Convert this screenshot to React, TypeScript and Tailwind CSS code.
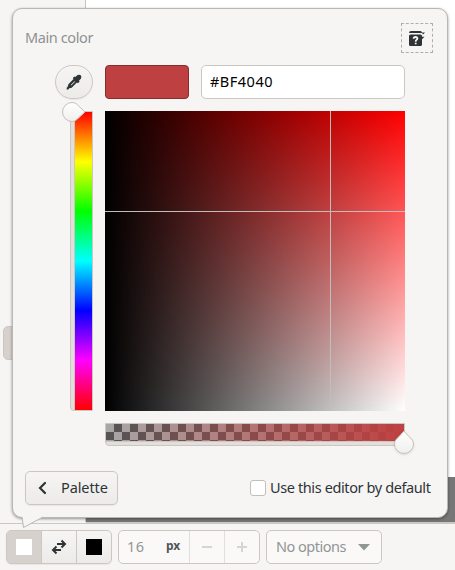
import type { ReactNode } from 'react';

const buttonFace = 'border border-[#cdc7c2] bg-linear-to-b from-[#f6f5f4] to-[#edebe9] shadow-[0_1px_1px_rgba(0,0,0,0.06)]';

function Label({ children, className }: { children: ReactNode; className: string }) {
  return <span className={`whitespace-nowrap pb-[2px] leading-5 ${className}`}>{children}</span>;
}

function Eyedropper() {
  return (
    <svg width="16" height="16" viewBox="0 0 16 16" fill="#2e3436">
      <path d="M10.600 1.800C11.700.6 13.600.3 14.700 1.300C15.800 2.400 15.400 4.300 14.200 5.400L13 6.500L13.600 7.600L12 9.200L10.900 8.500L5.700 13.700L3.300 14.300L2.200 15.400H.7V13.700L1.700 12.700L2.400 10.200L7.500 5.100L6.800 4L8.400 2.400L9.500 3zM8.500 7.200L5 10.700L4.700 11.500L5.500 11.200L9 7.700z" />
    </svg>
  );
}

function HelpIcon() {
  return (
    <svg width="16" height="16" viewBox="0 0 16 16" fill="#2e3436">
      <path d="M0 3Q0 1 2 1H11.500Q12.600 1 13 2.500H16L14 4.500L13 3H0z" />
      <path d="M1.500 4.500H11.500Q13 4.500 13 6V6.800H15.500L13 9.200V14.500Q13 16 11.500 16H1.500Q0 16 0 14.500V6Q0 4.500 1.500 4.500z" />
      <path d="M4.600 8.700Q4.700 7 6.500 7Q8.400 7 8.400 8.600Q8.400 9.500 7.400 10Q6.700 10.400 6.700 11.700" fill="none" stroke="#f6f5f4" strokeWidth="1.800" />
      <path d="M5.800 12.700h1.800v1.600H5.800z" fill="#f6f5f4" />
    </svg>
  );
}

function HueSlider() {
  return (
    <div className="relative ml-[57px] flex h-[300px] w-[23px] rounded-bl-sm border border-[#cdc7c2] bg-[#e1dedb]">
      <div className="ml-[3px] w-px bg-[#cdc7c2]" />
      <div className="flex-1 bg-[linear-gradient(to_bottom,#f00,#ff0_16.67%,#0f0_33.33%,#0ff_50%,#00f_66.67%,#f0f_83.33%,#f00)]" />
      <svg className="absolute -left-[12px] -top-[12px] overflow-visible" width="28" height="24" viewBox="0 0 28 24">
        <defs>
          <linearGradient id="hueKnob" x2="0" y2="1"><stop stopColor="#fff" /><stop offset="1" stopColor="#f0efed" /></linearGradient>
        </defs>
        <path d="M13 2.500C16 2.500 18 4 20 6.300L26 12L20 17.500C17.500 20.300 15.500 21.500 13 21.500A9.500 9.500 0 0 1 13 2.500z" fill="url(#hueKnob)" stroke="#c5bfb9" />
      </svg>
    </div>
  );
}

function AlphaSlider() {
  return (
    <div className="relative ml-[92px] mt-3 h-[23px] w-[300px] rounded-b-sm border border-[#cdc7c2] bg-[#e1dedb]">
      <div className="h-[17px] border-b border-[#cdc7c2] bg-[linear-gradient(to_right,rgba(191,64,64,0),#bf4040),repeating-conic-gradient(#555_0_25%,#a8a8a8_0_50%)] bg-[length:100%_100%,16px_16px] [box-sizing:content-box]" />
      <svg className="absolute -right-[11px] top-[5px] overflow-visible drop-shadow-[0_1px_1px_rgba(0,0,0,0.1)]" width="22" height="27" viewBox="0 0 22 27">
        <defs>
          <linearGradient id="alphaKnob" x2="0" y2="1"><stop stopColor="#fff" /><stop offset="1" stopColor="#f0efed" /></linearGradient>
        </defs>
        <path d="M11 2L16 7.600C18.800 10 20.500 12 20.500 15A9.500 9.500 0 0 1 1.500 15C1.500 12 3.200 10 6 7.600z" fill="url(#alphaKnob)" stroke="#c5bfb9" />
      </svg>
    </div>
  );
}

function Popover() {
  return (
    <div className="absolute left-3 top-2 h-[510px] w-[436px] rounded-[10px] border border-[#b9b7b4] bg-[#f6f5f4] shadow-[0_1px_3px_rgba(0,0,0,0.4)]">
      <div className="flex h-[30px] items-center justify-between pl-3 pr-[14px] mt-[14px]">
        <Label className="text-[14.5px] tracking-[-0.4px] text-[#8f9192]">Main color</Label>
        <div className="flex h-[30px] w-8 items-center justify-center border border-dashed border-[#adaeae]"><HelpIcon /></div>
      </div>
      <div className="mt-3 flex h-[34px] pl-[42px]">
        <div className={`flex w-[38px] items-center justify-center rounded-full ${buttonFace}`}><Eyedropper /></div>
        <div className="ml-3 w-[84px] rounded-[4px] border border-[#862d2d] bg-[#bf4040]" />
        <div className="ml-3 flex w-[204px] items-center rounded-[5px] border border-[#cdc7c2] bg-white pl-2">
          <Label className="text-[14.5px] tracking-[0.5px] text-black">#BF4040</Label>
        </div>
      </div>
      <div className="mt-3 flex h-[300px]">
        <HueSlider />
        <div className="ml-3 flex h-[300px] w-[300px] bg-[linear-gradient(to_right,#000,transparent),linear-gradient(to_bottom,#f00,#fff)]">
          <div className="grid w-full grid-cols-[225px_1px_1fr] grid-rows-[100px_1px_1fr]">
            <div className="col-start-2 row-span-3 row-start-1 bg-[#c0bebc]" />
            <div className="col-span-3 col-start-1 row-start-2 bg-[#c0bebc]" />
          </div>
        </div>
      </div>
      <AlphaSlider />
      <div className="mt-[25px] flex h-[34px] items-center pl-3">
        <div className={`flex h-[34px] w-[93px] items-center rounded-[5px] ${buttonFace}`}>
          <svg className="ml-[8px]" width="16" height="16" viewBox="0 0 16 16"><path d="M11 3L6 8L11 13" fill="none" stroke="#2e3436" strokeWidth="2.2" strokeLinecap="round" /></svg>
          <Label className="ml-[11px] text-[14.5px] tracking-[-0.1px] text-[#2e3436]">Palette</Label>
        </div>
        <div className="ml-[132px] size-4 rounded-[3px] border border-[#c5beb7] bg-white" />
        <Label className="ml-1 text-[14.5px] tracking-[-0.39px] text-[#2e3436]">Use this editor by default</Label>
      </div>
      <svg className="absolute left-[8px] top-[507px]" width="24" height="13" viewBox="0 0 24 13">
        <path d="M1 0V1L2.500 11.500L22 1V0z" fill="#f6f5f4" />
        <path d="M1 1L2.500 11.500L22 1" fill="none" stroke="#b9b7b4" />
      </svg>
    </div>
  );
}

function Toolbar() {
  return (
    <div className="flex h-[46px] bg-[#f6f5f4] pl-[6px] pt-[6px]">
      <div className={`flex h-[34px] w-[106px] overflow-hidden rounded-[5px] ${buttonFace}`}>
        <div className="flex w-[35px] items-center justify-center border-r border-[#cdc7c2] bg-[#d6d1cd]"><div className="size-4 bg-white" /></div>
        <div className="flex w-[35px] items-center justify-center border-r border-[#cdc7c2]">
          <svg width="16" height="16" viewBox="0 0 16 16" fill="none" stroke="#2e3436" strokeWidth="2">
            <path d="M6 5H13.500M10.500 1.500L14 5L10.500 8.500" />
            <path d="M10 11H2.500M5.500 7.500L2 11L5.500 14.500" />
          </svg>
        </div>
        <div className="flex flex-1 items-center justify-center"><div className="size-4 bg-black" /></div>
      </div>
      <div className="ml-[6px] flex h-[34px] w-[142px] items-center rounded-[5px] border border-[#cdc7c2] bg-[#faf9f8]">
        <Label className="w-[47px] pl-2 text-[14.5px] tracking-[0.5px] text-[#929595]">16</Label>
        <Label className="w-[23px] text-[12px] font-bold tracking-[-0.2px] text-[#4f5557]">px</Label>
        <div className="flex h-full w-[35px] items-center justify-center border-l border-[#e1dfdc]"><div className="h-[2px] w-[10px] bg-[#d5d5d4]" /></div>
        <div className="flex h-full w-[35px] items-center justify-center border-l border-[#e1dfdc]">
          <svg width="10" height="10" viewBox="0 0 10 10"><path d="M4 0h2v4h4v2H6v4H4V6H0V4h4z" fill="#d5d5d4" /></svg>
        </div>
      </div>
      <div className="ml-[6px] flex h-[34px] w-[116px] items-center rounded-[5px] border border-[#cdc7c2] bg-[#faf9f8] pl-[9px]">
        <Label className="w-[82px] text-[14.5px] tracking-[-0.5px] text-[#929595]">No options</Label>
        <svg width="12" height="7" viewBox="0 0 12 7"><path d="M0 0H12L6 6.500z" fill="#929595" /></svg>
      </div>
    </div>
  );
}

export default function App() {
  return (
    <div className="relative flex h-[570px] w-[455px] flex-col overflow-hidden bg-[#f6f5f4] font-['Noto_Sans',sans-serif]">
      <div className="flex h-[522px]">
        <div className="w-[86px] border-r border-[#c5c2bf] bg-[#f6f5f4] pl-[3px] pt-[326px]">
          <div className="h-[34px] w-6 rounded-[5px] border border-[#cdc7c2] bg-[#d6d1cd]" />
        </div>
        <div className="flex flex-1 flex-col"><div className="h-[477px] bg-white" /><div className="flex-1 bg-[#777]" /></div>
      </div>
      <div className="flex h-[2px]"><div className="w-[86px] border-b border-[#cdc7c2]" /><div className="flex-1 bg-[#cdc7c2]" /></div>
      <Toolbar />
      <Popover />
    </div>
  );
}
